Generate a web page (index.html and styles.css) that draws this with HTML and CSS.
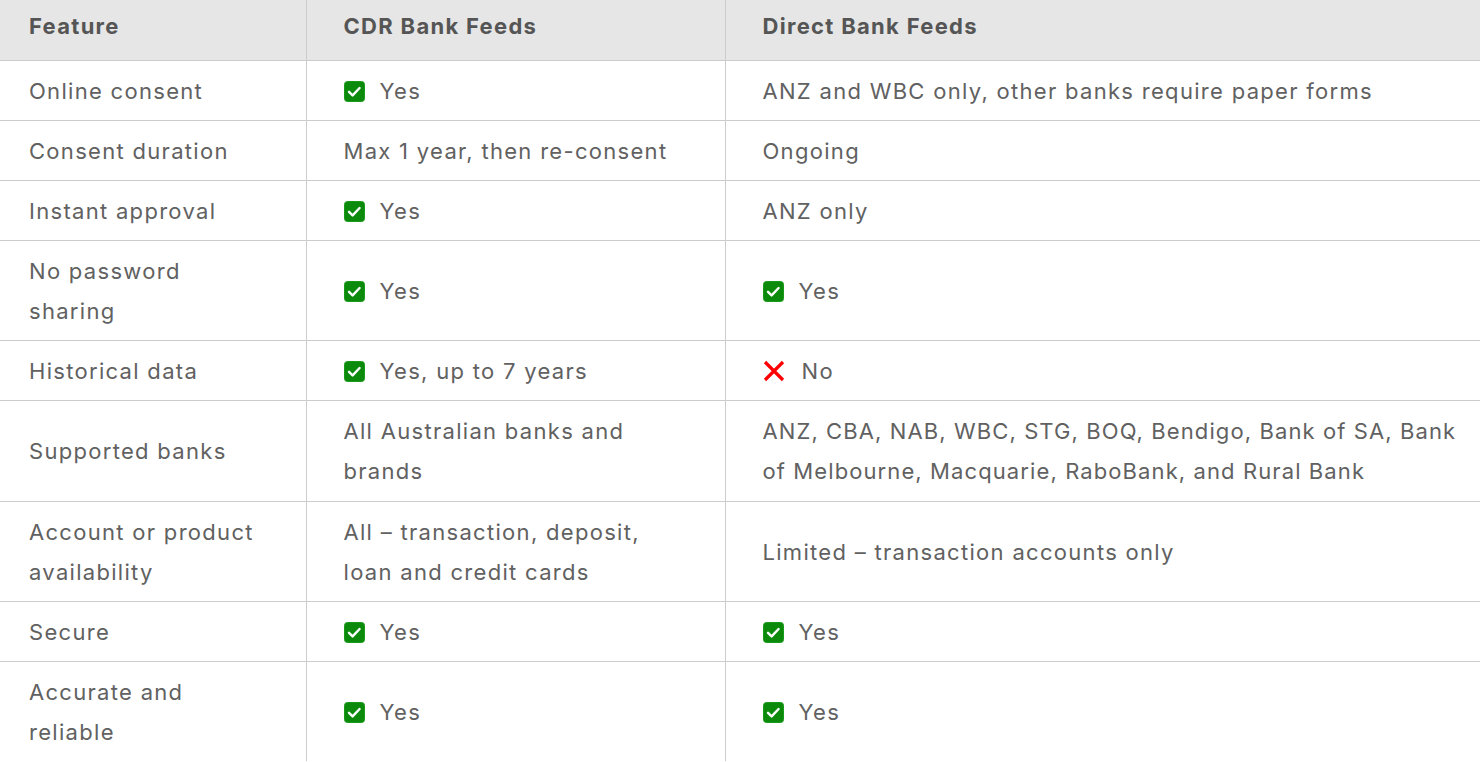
FILE: index.html
```html
<!DOCTYPE html>
<html lang="en">
<head>
<meta charset="utf-8">
<title>CDR vs Direct Bank Feeds</title>
<link rel="stylesheet" href="styles.css">
</head>
<body>
<table class="cmp">
  <colgroup>
    <col class="c1"><col class="c2"><col class="c3">
  </colgroup>
  <thead>
    <tr><th>Feature</th><th>CDR Bank Feeds</th><th>Direct Bank Feeds</th></tr>
  </thead>
  <tbody>
    <tr><td>Online consent</td><td><span class="yes"><svg class="ic" viewBox="0 0 21 21"><rect x="0.5" y="0.5" width="20" height="20" rx="3" class="bx"/><path d="M5 10.8l3.6 3.6 7-7.4" class="ck"/></svg>Yes</span></td><td>ANZ and WBC only, other banks require paper forms</td></tr>
    <tr><td>Consent duration</td><td>Max 1 year, then re-consent</td><td>Ongoing</td></tr>
    <tr><td>Instant approval</td><td><span class="yes"><svg class="ic" viewBox="0 0 21 21"><rect x="0.5" y="0.5" width="20" height="20" rx="3" class="bx"/><path d="M5 10.8l3.6 3.6 7-7.4" class="ck"/></svg>Yes</span></td><td>ANZ only</td></tr>
    <tr><td>No password<br>sharing</td><td><span class="yes"><svg class="ic" viewBox="0 0 21 21"><rect x="0.5" y="0.5" width="20" height="20" rx="3" class="bx"/><path d="M5 10.8l3.6 3.6 7-7.4" class="ck"/></svg>Yes</span></td><td><span class="yes"><svg class="ic" viewBox="0 0 21 21"><rect x="0.5" y="0.5" width="20" height="20" rx="3" class="bx"/><path d="M5 10.8l3.6 3.6 7-7.4" class="ck"/></svg>Yes</span></td></tr>
    <tr><td>Historical data</td><td><span class="yes"><svg class="ic" viewBox="0 0 21 21"><rect x="0.5" y="0.5" width="20" height="20" rx="3" class="bx"/><path d="M5 10.8l3.6 3.6 7-7.4" class="ck"/></svg>Yes, up to 7 years</span></td><td><span class="no"><svg class="ic-x" viewBox="0 0 22 22"><path d="M2 2L20 20M20 2L2 20" class="xx"/></svg>No</span></td></tr>
    <tr class="tall"><td>Supported banks</td><td>All Australian banks and<br>brands</td><td class="dense">ANZ, CBA, NAB, WBC, STG, BOQ, Bendigo, Bank of SA, Bank<br>of Melbourne, Macquarie, RaboBank, and Rural Bank</td></tr>
    <tr><td>Account or product<br>availability</td><td>All – transaction, deposit,<br>loan and credit cards</td><td>Limited – transaction accounts only</td></tr>
    <tr><td>Secure</td><td><span class="yes"><svg class="ic" viewBox="0 0 21 21"><rect x="0.5" y="0.5" width="20" height="20" rx="3" class="bx"/><path d="M5 10.8l3.6 3.6 7-7.4" class="ck"/></svg>Yes</span></td><td><span class="yes"><svg class="ic" viewBox="0 0 21 21"><rect x="0.5" y="0.5" width="20" height="20" rx="3" class="bx"/><path d="M5 10.8l3.6 3.6 7-7.4" class="ck"/></svg>Yes</span></td></tr>
    <tr><td>Accurate and<br>reliable</td><td><span class="yes"><svg class="ic" viewBox="0 0 21 21"><rect x="0.5" y="0.5" width="20" height="20" rx="3" class="bx"/><path d="M5 10.8l3.6 3.6 7-7.4" class="ck"/></svg>Yes</span></td><td><span class="yes"><svg class="ic" viewBox="0 0 21 21"><rect x="0.5" y="0.5" width="20" height="20" rx="3" class="bx"/><path d="M5 10.8l3.6 3.6 7-7.4" class="ck"/></svg>Yes</span></td></tr>
  </tbody>
</table>
</body>
</html>
```

FILE: styles.css
```css
html, body {
  margin: 0;
  padding: 0;
  background: #ffffff;
}
body {
  font-family: Inter, "Open Sans", sans-serif;
  font-size: 22px;
  letter-spacing: 1.3px;
  color: #616161;
  overflow: hidden;
}
.cmp {
  width: 1480px;
  border-collapse: collapse;
  table-layout: fixed;
}
.c1 { width: 306px; }
.c2 { width: 419px; }
.c3 { width: 755px; }
.cmp th, .cmp td {
  text-align: left;
  vertical-align: middle;
  padding: 10px 10px 9px 37px;
  line-height: 40px;
  border-bottom: 1px solid #cccccc;
  border-left: 1px solid #cccccc;
  white-space: nowrap;
}
.cmp th:first-child, .cmp td:first-child {
  padding-left: 29px;
  border-left: none;
}
.cmp thead th {
  padding-top: 6px;
  padding-bottom: 14px;
  background: #e6e6e6;
  font-weight: 700;
  color: #555555;
}
.cmp tbody tr.tall td { padding-bottom: 10px; }
.cmp tbody tr:last-child td { border-bottom: none; }
.cmp td.dense { letter-spacing: 1.1px; }
.yes, .no {
  display: flex;
  align-items: center;
  gap: 15px;
}
.no { gap: 17px; }
.ic { width: 21px; height: 21px; flex: none; }
.ic .bx { fill: #0b8a0b; stroke: #1a9a1a; stroke-width: 1; }
.ic .ck { fill: none; stroke: #ffffff; stroke-width: 2.4; stroke-linecap: round; stroke-linejoin: round; }
.ic-x { width: 22px; height: 22px; flex: none; }
.ic-x .xx { stroke: #ff0000; stroke-width: 3.2; fill: none; }
```
